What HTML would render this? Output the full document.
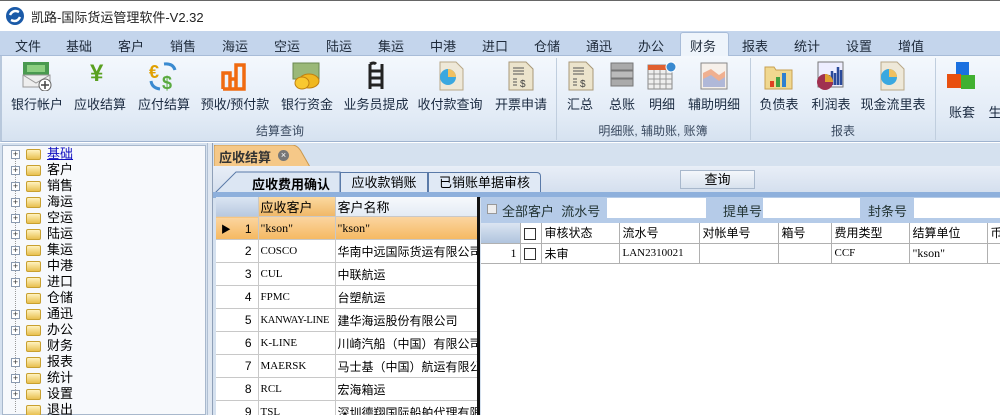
<!DOCTYPE html>
<html><head><meta charset="utf-8">
<style>
*{margin:0;padding:0;box-sizing:border-box}
body{width:1000px;height:415px;overflow:hidden;position:relative;background:#fff;font-family:"Liberation Sans","Noto Sans CJK SC",sans-serif;font-size:12px;color:#000}
.a{position:absolute}
.menu span{position:absolute;top:36px;font-size:13px;color:#1e2a3a}
.rb{position:absolute;top:94px;font-size:13px;color:#1a2a40;white-space:nowrap;transform:translateX(-50%)}
.gl{position:absolute;top:122px;font-size:12px;color:#3a4a60;transform:translateX(-50%);white-space:nowrap}
.ic{position:absolute;top:61px;width:30px;height:30px}
.tree div{position:absolute;left:0;width:180px;height:16px;font-size:13px;line-height:16px;white-space:nowrap}
.tree .pb{position:absolute;left:11px;top:4px;width:9px;height:9px;border:1px solid #8a9ab0;background:#fff;font-size:9px;line-height:6px;text-align:center;color:#333}
.tree .fd{position:absolute;left:26px;top:3px;width:15px;height:11px;background:linear-gradient(#fff3c0,#e8c050);border:1px solid #c8a030;border-radius:2px}
.tree .tx{position:absolute;left:47px;top:0}
.g td{border-right:1px solid #c8c8c8;border-bottom:1px solid #c8c8c8;height:23px;padding:0 2px;white-space:nowrap;overflow:hidden;font-family:"Liberation Serif","Noto Sans CJK SC",serif;font-size:11px}
.g td.c{font-family:"Liberation Sans","Noto Sans CJK SC",sans-serif;font-size:12px}
.g td.n{background:#fff;text-align:right;padding-right:6px;font-family:"Liberation Sans",sans-serif;font-size:12px}
table{border-collapse:collapse;table-layout:fixed}
.r td{border-right:1px solid #b0b0b0;border-bottom:1px solid #b0b0b0;height:20px;padding:0 3px;white-space:nowrap;overflow:hidden;font-size:12px}
</style></head><body>
<div class="a" style="left:0;top:0;width:1000px;height:31px;background:#fff;border-top:1px solid #666"></div>
<svg class="a" style="left:5px;top:6px" width="20" height="20"><circle cx="10" cy="10" r="9" fill="#1a5aa8"/><path d="M5 9 Q8 3 14 6 M15 11 Q12 17 6 14" stroke="#fff" stroke-width="2.5" fill="none"/></svg>
<div class="a" style="left:31px;top:7px;font-size:13px;color:#222">凯路-国际货运管理软件-V2.32</div>
<div class="a" style="left:0;top:31px;width:1000px;height:25px;background:#c4d5ec;border-bottom:1px solid #a8bcd8"></div>
<div class="a" style="left:680px;top:32px;width:49px;height:25px;background:#eef4fb;border:1px solid #a8bcd8;border-bottom:none;border-radius:3px 3px 0 0"></div>
<div class="menu">
<span style="left:15px">文件</span><span style="left:66px">基础</span><span style="left:118px">客户</span><span style="left:170px">销售</span><span style="left:222px">海运</span><span style="left:274px">空运</span><span style="left:326px">陆运</span><span style="left:378px">集运</span><span style="left:430px">中港</span><span style="left:482px">进口</span><span style="left:534px">仓储</span><span style="left:586px">通迅</span><span style="left:638px">办公</span><span style="left:690px">财务</span><span style="left:742px">报表</span><span style="left:794px">统计</span><span style="left:846px">设置</span><span style="left:898px">增值</span>
</div>
<div class="a" style="left:0;top:56px;width:1000px;height:86px;background:linear-gradient(#f4f8fd,#e2ebf6 70%,#d6e2f0);border-bottom:1px solid #9fb3cf;border-left:2px solid #b8c8dc"></div>
<div class="a" style="left:556px;top:58px;width:1px;height:82px;background:#c0cede"></div>
<div class="a" style="left:750px;top:58px;width:1px;height:82px;background:#c0cede"></div>
<div class="a" style="left:935px;top:58px;width:1px;height:82px;background:#c0cede"></div>
<svg class="ic" style="left:22px"><rect x="1" y="1" width="26" height="13" fill="#4a9a50"/><rect x="5" y="4" width="18" height="7" fill="#8ccf80"/><path d="M1 14 L28 14 L28 26 L1 26Z" fill="#eee" stroke="#999"/><path d="M1 14 L14 22 L28 14" stroke="#999" fill="none"/><circle cx="23" cy="24" r="6" fill="#fff" stroke="#666"/><path d="M23 20v8M19 24h8" stroke="#444" stroke-width="1.5"/></svg>
<div class="a" style="left:90px;top:60px;font-size:24px;color:#5aa020;font-weight:bold">¥</div>
<svg class="ic" style="left:149px"><text x="0" y="17" font-size="18" fill="#e0a000" font-weight="bold" font-family="Liberation Sans">€</text><text x="13" y="28" font-size="18" fill="#5aaa40" font-weight="bold" font-family="Liberation Sans">$</text><path d="M15 3 Q24 2 26 9" stroke="#3a8ad0" stroke-width="3" fill="none"/><path d="M2 20 Q3 27 11 28" stroke="#3a8ad0" stroke-width="3" fill="none"/></svg>
<svg class="ic" style="left:220px"><path d="M3 28 V12 H10 V28 M10 28 V18 H16 V28 M16 28 V4 H24 V28 H3" stroke="#f06a10" stroke-width="3.5" fill="none"/></svg>
<svg class="ic" style="left:292px"><rect x="1" y="2" width="26" height="16" fill="#9ab878" stroke="#6a8850"/><ellipse cx="17" cy="20" rx="10" ry="7" fill="#f0b820" stroke="#c08010"/><ellipse cx="10" cy="22" rx="7" ry="6" fill="#f8c830" stroke="#c08010"/></svg>
<svg class="ic" style="left:362px"><path d="M8 3 V28 M20 3 V28 M8 10 H20 M8 17 H20 M8 24 H20 M8 3 Q12 1 14 3" stroke="#222" stroke-width="3" fill="none"/></svg>
<svg class="ic" style="left:436px"><path d="M4 1 H20 L27 8 V29 H4Z" fill="#eee8d8" stroke="#b8a888"/><circle cx="12" cy="16" r="8" fill="#3aa8e0"/><path d="M12 16 V8 A8 8 0 0 1 20 16Z" fill="#f0c060"/></svg>
<svg class="ic" style="left:506px"><path d="M3 1 H20 L27 8 V29 H3Z" fill="#ece4cc" stroke="#a89878"/><path d="M7 7h11M7 10h11M7 13h11M7 18h4M7 21h4M7 24h4" stroke="#555"/><text x="14" y="26" font-size="10" fill="#444">$</text></svg>
<svg class="ic" style="left:566px"><path d="M3 1 H20 L27 8 V29 H3Z" fill="#ece4cc" stroke="#a89878"/><path d="M7 7h11M7 10h11M7 13h11M7 18h4M7 21h4M7 24h4" stroke="#555"/><text x="14" y="26" font-size="10" fill="#444">$</text></svg>
<svg class="ic" style="left:608px"><rect x="3" y="2" width="22" height="7" fill="#aaa" stroke="#777"/><rect x="3" y="10" width="22" height="7" fill="#bbb" stroke="#777"/><rect x="3" y="18" width="22" height="7" fill="#aaa" stroke="#777"/></svg>
<svg class="ic" style="left:647px"><rect x="1" y="4" width="24" height="24" fill="#eee" stroke="#888"/><rect x="1" y="4" width="24" height="5" fill="#e06030"/><path d="M1 13h24M1 18h24M1 23h24M7 9v19M13 9v19M19 9v19" stroke="#999"/><circle cx="24" cy="6" r="5" fill="#3a8ad0" stroke="#fff"/></svg>
<svg class="ic" style="left:699px"><rect x="2" y="2" width="26" height="26" fill="#f6f0ea" stroke="#888"/><path d="M4 12 L12 8 L20 14 L26 10 V26 H4Z" fill="#f0b090"/><path d="M4 18 L12 14 L20 20 L26 16 V26 H4Z" fill="#b0b8d8"/></svg>
<svg class="ic" style="left:764px"><path d="M1 6 H10 L12 9 H28 V28 H1Z" fill="#f0d890" stroke="#c8a050"/><rect x="6" y="20" width="4" height="6" fill="#e04020"/><rect x="12" y="16" width="4" height="10" fill="#40a040"/><rect x="18" y="12" width="4" height="14" fill="#3080d0"/></svg>
<svg class="ic" style="left:815px"><rect x="3" y="1" width="25" height="25" fill="#eef" stroke="#777"/><path d="M14 24V14M17 24V10M20 24V12M23 24V6M26 24V9" stroke="#2a4a9a" stroke-width="2.5"/><circle cx="10" cy="21" r="8" fill="#a03050"/><path d="M10 21 L10 13 A8 8 0 0 1 18 21Z" fill="#e0a030"/></svg>
<svg class="ic" style="left:877px"><path d="M4 1 H20 L27 8 V29 H4Z" fill="#eee8d8" stroke="#b8a888"/><circle cx="12" cy="16" r="8" fill="#3aa8e0"/><path d="M12 16 V8 A8 8 0 0 1 20 16Z" fill="#f0c060"/></svg>
<svg class="a" style="left:945px;top:61px" width="34" height="34"><rect x="11" y="1" width="13" height="13" fill="#1a70e0"/><rect x="2" y="13" width="14" height="14" fill="#e85010"/><rect x="16" y="14" width="14" height="14" fill="#40b030"/></svg>
<div class="rb" style="left:37px">银行帐户</div><div class="rb" style="left:100px">应收结算</div><div class="rb" style="left:164px">应付结算</div><div class="rb" style="left:235px">预收/预付款</div><div class="rb" style="left:307px">银行资金</div><div class="rb" style="left:376px">业务员提成</div><div class="rb" style="left:450px">收付款查询</div><div class="rb" style="left:521px">开票申请</div><div class="rb" style="left:580px">汇总</div><div class="rb" style="left:622px">总账</div><div class="rb" style="left:662px">明细</div><div class="rb" style="left:714px">辅助明细</div><div class="rb" style="left:779px">负债表</div><div class="rb" style="left:831px">利润表</div><div class="rb" style="left:893px">现金流里表</div><div class="rb" style="left:962px;top:102px">账套</div><div class="rb" style="left:995px;top:102px">生</div>
<div class="gl" style="left:280px">结算查询</div><div class="gl" style="left:653px">明细账, 辅助账, 账簿</div><div class="gl" style="left:843px">报表</div>
<div class="a" style="left:0;top:143px;width:1000px;height:272px;background:#d5e1ef"></div>
<div class="a" style="left:2px;top:145px;width:204px;height:270px;background:#f7f9fc;border:1px solid #a8b8cc"></div>
<div class="a" style="left:207px;top:143px;width:6px;height:272px;background:#dfe7f1;border-left:1px solid #b0bfd2;border-right:1px solid #8fa0b8"></div>
<div class="a" style="left:15px;top:156px;height:256px;border-left:1px dotted #999"></div>
<div class="tree a" style="left:0;top:146px;width:200px;height:269px;overflow:hidden">
<div style="top:0"><span class="pb">+</span><span class="fd"></span><span class="tx" style="color:#1010c0;text-decoration:underline">基础</span></div>
<div style="top:16px"><span class="pb">+</span><span class="fd"></span><span class="tx">客户</span></div>
<div style="top:32px"><span class="pb">+</span><span class="fd"></span><span class="tx">销售</span></div>
<div style="top:48px"><span class="pb">+</span><span class="fd"></span><span class="tx">海运</span></div>
<div style="top:64px"><span class="pb">+</span><span class="fd"></span><span class="tx">空运</span></div>
<div style="top:80px"><span class="pb">+</span><span class="fd"></span><span class="tx">陆运</span></div>
<div style="top:96px"><span class="pb">+</span><span class="fd"></span><span class="tx">集运</span></div>
<div style="top:112px"><span class="pb">+</span><span class="fd"></span><span class="tx">中港</span></div>
<div style="top:128px"><span class="pb">+</span><span class="fd"></span><span class="tx">进口</span></div>
<div style="top:144px"><span class="fd"></span><span class="tx">仓储</span></div>
<div style="top:160px"><span class="pb">+</span><span class="fd"></span><span class="tx">通迅</span></div>
<div style="top:176px"><span class="pb">+</span><span class="fd"></span><span class="tx">办公</span></div>
<div style="top:192px"><span class="fd"></span><span class="tx">财务</span></div>
<div style="top:208px"><span class="pb">+</span><span class="fd"></span><span class="tx">报表</span></div>
<div style="top:224px"><span class="pb">+</span><span class="fd"></span><span class="tx">统计</span></div>
<div style="top:240px"><span class="pb">+</span><span class="fd"></span><span class="tx">设置</span></div>
<div style="top:256px"><span class="fd"></span><span class="tx">退出</span></div>
</div>
<svg class="a" style="left:214px;top:145px" width="100" height="22"><path d="M0 22 V2 Q0 0 2 0 H78 Q84 0 88 8 L96 22Z" fill="#f5c888" stroke="#c89850"/></svg>
<div class="a" style="left:219px;top:147px;font-size:13px;font-weight:bold;color:#333">应收结算</div>
<div class="a" style="left:278px;top:150px;width:11px;height:11px;border-radius:50%;background:#777;color:#fff;font-size:9px;line-height:11px;text-align:center">×</div>
<div class="a" style="left:213px;top:166px;width:787px;height:27px;background:linear-gradient(#e8eef7,#d4dfee)"></div>
<svg class="a" style="left:214px;top:171px" width="130" height="23"><path d="M0 23 L22 1 H126 V23Z" fill="#dce6f3" stroke="#5a7aa8"/></svg>
<div class="a" style="left:252px;top:174px;font-size:13px;font-weight:bold">应收费用确认</div>
<div class="a" style="left:340px;top:172px;width:88px;height:21px;background:#e0e9f5;border:1px solid #5a7aa8;border-bottom:none;font-size:13px;text-align:center;line-height:20px">应收款销账</div>
<div class="a" style="left:428px;top:172px;width:113px;height:21px;background:#e0e9f5;border:1px solid #5a7aa8;border-bottom:none;border-radius:0 4px 0 0;font-size:13px;text-align:center;line-height:20px">已销账单据审核</div>
<div class="a" style="left:680px;top:170px;width:75px;height:19px;background:linear-gradient(#f4f7fb,#d8e2ee);border:1px solid #a8b8cc;font-size:13px;text-align:center;line-height:17px">查询</div>
<div class="a" style="left:213px;top:192px;width:787px;height:6px;background:#8eb0dc"></div>
<div class="a" style="left:216px;top:197px;width:264px;height:218px;background:#fff;border-right:3px solid #111;overflow:hidden">
<table style="width:261px">
<colgroup><col style="width:42px"><col style="width:77px"><col style="width:142px"></colgroup>
<tbody class="g">
<tr><td style="background:linear-gradient(#dbe5f2,#b8c9e0);height:19px"></td><td class="c" style="background:linear-gradient(#fbd9a0,#f0b868);font-size:13px;height:19px">应收客户</td><td class="c" style="background:linear-gradient(#f7f9fc,#e4ebf4);font-size:13px;height:19px">客户名称</td></tr>
<tr style="background:linear-gradient(#fbd5a0,#f5b860)"><td class="c" style="background:linear-gradient(#fbd5a0,#f5b860);text-align:right;padding-right:6px;font-size:10px">▶&nbsp;&nbsp;&nbsp;&nbsp;&nbsp;<span style="font-size:12px">1</span></td><td style="font-size:12px">"kson"</td><td style="font-size:12px">"kson"</td></tr>
<tr><td class="n">2</td><td>COSCO</td><td class="c">华南中远国际货运有限公司</td></tr>
<tr><td class="n">3</td><td>CUL</td><td class="c">中联航运</td></tr>
<tr><td class="n">4</td><td>FPMC</td><td class="c">台塑航运</td></tr>
<tr><td class="n">5</td><td style="font-size:10.5px;letter-spacing:-0.3px">KANWAY-LINE</td><td class="c">建华海运股份有限公司</td></tr>
<tr><td class="n">6</td><td>K-LINE</td><td class="c">川崎汽船（中国）有限公司</td></tr>
<tr><td class="n">7</td><td>MAERSK</td><td class="c">马士基（中国）航运有限公司</td></tr>
<tr><td class="n">8</td><td>RCL</td><td class="c">宏海箱运</td></tr>
<tr><td class="n">9</td><td>TSL</td><td class="c">深圳德翔国际船舶代理有限</td></tr>
</tbody></table></div>
<div class="a" style="left:481px;top:197px;width:519px;height:26px;background:#b5cbe8"></div>
<div class="a" style="left:487px;top:204px;width:10px;height:10px;border:1px solid #999;background:#eee"></div>
<div class="a" style="left:502px;top:201px;font-size:13px;color:#233">全部客户&nbsp;&nbsp;流水号</div>
<div class="a" style="left:607px;top:198px;width:99px;height:20px;background:#fff"></div>
<div class="a" style="left:723px;top:201px;font-size:13px;color:#233">提单号</div>
<div class="a" style="left:763px;top:198px;width:97px;height:20px;background:#fff"></div>
<div class="a" style="left:868px;top:201px;font-size:13px;color:#233">封条号</div>
<div class="a" style="left:914px;top:198px;width:86px;height:20px;background:#fff"></div>
<div class="a" style="left:481px;top:223px;width:519px;height:192px;background:#fff"></div>
<table class="a r" style="left:481px;top:223px;width:530px">
<colgroup><col style="width:39px"><col style="width:21px"><col style="width:78px"><col style="width:80px"><col style="width:79px"><col style="width:53px"><col style="width:78px"><col style="width:78px"><col style="width:24px"></colgroup>
<tr style="font-size:13px"><td style="background:linear-gradient(#dbe5f2,#b0c4de)"></td><td><span style="display:inline-block;width:12px;height:12px;border:1px solid #333;vertical-align:middle"></span></td><td>审核状态</td><td>流水号</td><td>对帐单号</td><td>箱号</td><td>费用类型</td><td>结算单位</td><td>币</td></tr>
<tr><td style="text-align:right;font-family:'Liberation Serif'">1</td><td><span style="display:inline-block;width:12px;height:12px;border:1px solid #333;vertical-align:middle"></span></td><td>未审</td><td style="font-family:'Liberation Serif';font-size:11px">LAN2310021</td><td></td><td></td><td style="font-family:'Liberation Serif';font-size:11px">CCF</td><td style="font-family:'Liberation Serif'">"kson"</td><td></td></tr>
</table>
</body></html>
